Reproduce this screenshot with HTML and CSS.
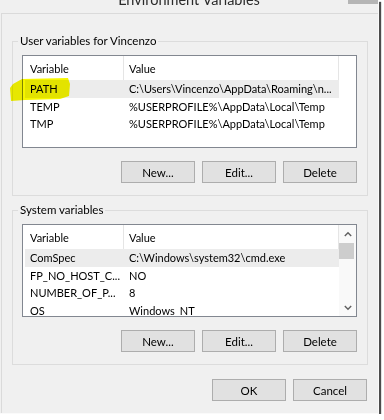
FILE: index.html
```html
<!DOCTYPE html>
<html lang="en">
<head>
  <meta charset="UTF-8" />
  <title>Environment Variables</title>
  <link rel="stylesheet" href="styles.css">
</head>
<body>
  <div class="window">
    <div class="titlebar">
      <span class="title">Environment Variables</span>
      <span class="close-btn"></span>
    </div>

    <div class="client">
      <section class="group">
        <div class="group-title">User variables for Vincenzo</div>
        <div class="listbox">
          <div class="list-body">
            <div class="list-head">
              <span>Variable</span>
              <span>Value</span>
            </div>
            <div class="row selected"><span>PATH</span><span>C:\Users\Vincenzo\AppData\Roaming\n...</span></div>
            <div class="row"><span>TEMP</span><span>%USERPROFILE%\AppData\Local\Temp</span></div>
            <div class="row"><span>TMP</span><span>%USERPROFILE%\AppData\Local\Temp</span></div>
          </div>
        </div>
        <div class="button-row">
          <button>New...</button>
          <button>Edit...</button>
          <button>Delete</button>
        </div>
      </section>

      <section class="group">
        <div class="group-title">System variables</div>
        <div class="listbox">
          <div class="list-body">
            <div class="list-head">
              <span>Variable</span>
              <span>Value</span>
            </div>
            <div class="row selected"><span>ComSpec</span><span>C:\Windows\system32\cmd.exe</span></div>
            <div class="row"><span>FP_NO_HOST_C...</span><span>NO</span></div>
            <div class="row"><span>NUMBER_OF_P...</span><span>8</span></div>
            <div class="row"><span>OS</span><span>Windows_NT</span></div>
          </div>
          <div class="scrollbar">
            <div class="scroll-arrow">
              <svg width="8" height="6" viewBox="0 0 8 6"><polyline points="0.8,5 4,1.8 7.2,5" /></svg>
            </div>
            <div class="scroll-thumb"></div>
            <div class="scroll-track"></div>
            <div class="scroll-arrow">
              <svg width="8" height="6" viewBox="0 0 8 6"><polyline points="0.8,1 4,4.2 7.2,1" /></svg>
            </div>
          </div>
        </div>
        <div class="button-row">
          <button>New...</button>
          <button>Edit...</button>
          <button>Delete</button>
        </div>
      </section>

      <div class="dialog-buttons">
        <button>OK</button>
        <button>Cancel</button>
      </div>
    </div>

    <!-- marcatore giallo sopra PATH -->
    <svg class="marker" width="64" height="28" viewBox="0 0 64 28">
      <polygon points="14,3 60,2 62,8 61,20 52,23 17,24 3,25 2,12 5,8" />
    </svg>
  </div>
</body>
</html>
```

FILE: styles.css
```css
:root {
  --face: #f0f0f0;
  --group-border: #dcdcdc;
  --list-border: #828790;
  --btn-border: #adadad;
  --btn-face: #e1e1e1;
  --selected: #ececec;
}

* {
  margin: 0;
  padding: 0;
  box-sizing: border-box;
}

body {
  background: #ffffff;
  font-family: 'Lato', 'Open Sans', sans-serif;
  font-size: 11px;
  color: #000;
}

.window {
  position: relative;
  width: 379px;
  height: 414px;
  background: var(--face);
  border-right: 1px solid #fafafa;
  border-bottom: 1px solid #fafafa;
  box-shadow: 2px 2px 1px rgba(0, 0, 0, 0.7);
}

/* barra del titolo, tagliata in alto */
.titlebar {
  height: 13px;
  display: grid;
  grid-template-columns: 1fr auto 1fr;
  overflow: hidden;
}

.title {
  grid-column: 2;
  font-size: 14.5px;
  line-height: 20px;
  margin-top: -10px;
  color: #2b2b2b;
}

.close-btn {
  grid-column: 3;
  justify-self: end;
  width: 30px;
  height: 4px;
  background: #b5b5b5;
}

.client {
  margin-left: 1px;
  height: 400px;
  border-left: 1px solid #dadada;
  border-top: 1px solid #dadada;
  padding: 27px 10px 0 10px;
}

.group {
  border: 1px solid var(--group-border);
  padding: 0 10px 12px 9px;
}

.group + .group {
  margin-top: 14px;
}

.group-title {
  width: fit-content;
  margin: -9px 0 6px -4px;
  padding: 0 2px;
  line-height: 16px;
  font-size: 11.5px;
  background: var(--face);
}

.listbox {
  height: 93px;
  border: 1px solid var(--list-border);
  background: #fff;
  display: flex;
  overflow: hidden;
}

.list-body {
  flex: 1;
}

.list-head {
  display: grid;
  grid-template-columns: 101px 215px;
  height: 24px;
}

.list-head span {
  display: flex;
  align-items: center;
  padding-left: 7px;
  border-right: 1px solid #e5e5e5;
}

.list-head span + span {
  padding-left: 5px;
}

.row {
  display: grid;
  grid-template-columns: 99px 1fr;
  align-items: center;
  width: 314px;
  height: 17.5px;
  margin-left: 2px;
  white-space: nowrap;
}

.row span {
  padding-left: 5px;
  overflow: hidden;
}

.row.selected {
  background: var(--selected);
}

.scrollbar {
  width: 17px;
  display: flex;
  flex-direction: column;
  background: #f9f9f9;
}

.scroll-arrow {
  height: 17px;
  display: flex;
  align-items: center;
  justify-content: center;
}

.scroll-arrow svg {
  fill: none;
  stroke: #606060;
  stroke-width: 1.4;
}

.scroll-thumb {
  height: 16px;
  margin: 1px 2px 0 0;
  background: #cdcdcd;
}

.scroll-track {
  flex: 1;
}

.button-row,
.dialog-buttons {
  display: flex;
  justify-content: flex-end;
  gap: 7px;
}

.button-row {
  margin-top: 13px;
}

.dialog-buttons {
  margin-top: 14px;
  margin-right: 1px;
}

button {
  width: 74px;
  height: 22px;
  border: 1px solid var(--btn-border);
  background: var(--btn-face);
  font: inherit;
  font-size: 11.5px;
  color: #000;
}

.marker {
  position: absolute;
  left: 8px;
  top: 76px;
  mix-blend-mode: multiply;
}

.marker polygon {
  fill: #f6f600;
}
```
